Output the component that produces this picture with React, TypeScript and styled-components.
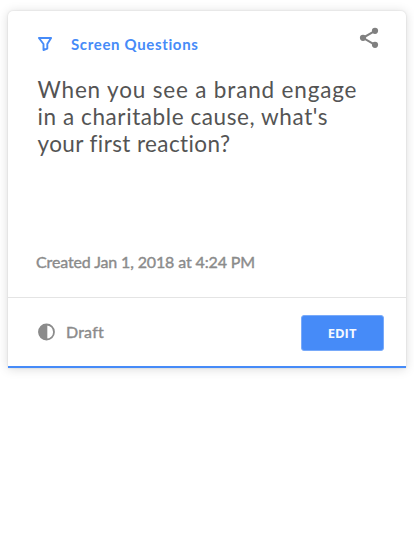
import React from 'react';
import styled, { createGlobalStyle } from 'styled-components';

const GlobalStyle = createGlobalStyle`
  * { box-sizing: border-box; }
  body { margin: 0; background: #fff; font-family: Lato, "Open Sans", sans-serif; }
`;

const Page = styled.main`
  width: 414px;
  height: 537px;
  padding: 10.5px 8px 0;
  overflow: hidden;
`;

const Card = styled.article`
  display: flex;
  flex-direction: column;
  width: 397.6px;
  height: 357px;
  background: #fff;
  border-bottom: 2px solid #468bf8;
  border-radius: 5px 5px 0 0;
  box-shadow: 0 0 2px rgba(0, 0, 0, 0.14), 0 1px 11px rgba(0, 0, 0, 0.15);
`;

const Body = styled.div`
  display: flex;
  flex-direction: column;
  height: 286.5px;
  padding: 16.5px 26.6px 0 29px;
`;

const Header = styled.header`
  display: flex;
  align-items: flex-start;
  height: 40px;
`;

const FilterIcon = styled.svg`
  width: 16px;
  height: 16px;
  margin-top: 9px;
`;

const Category = styled.span`
  margin: 7px 0 0 18px;
  font-size: 15px;
  font-weight: 700;
  line-height: 20px;
  letter-spacing: 0.65px;
  color: #468bf8;
  white-space: nowrap;
`;

const ShareButton = styled.button`
  display: flex;
  margin-left: auto;
  padding: 0;
  border: 0;
  background: none;
`;

const Question = styled.h1`
  margin: 10.4px 0 0 0.5px;
  font-size: 22.5px;
  font-weight: 400;
  line-height: 26.7px;
  color: #545454;
`;

const Line = styled.span<{ $spacing: number }>`
  display: block;
  letter-spacing: ${({ $spacing }) => $spacing}px;
  white-space: nowrap;
`;

const Created = styled.p`
  margin: auto 0 25px -1px;
  font-size: 16px;
  font-weight: 400;
  line-height: 20px;
  letter-spacing: -0.13px;
  color: #8b8b8b;
  -webkit-text-stroke: 0.4px #8b8b8b;
  white-space: nowrap;
`;

const Footer = styled.footer`
  display: flex;
  align-items: center;
  flex: 1;
  padding: 3px 22px 0 30px;
  border-top: 1px solid #e4e4e4;
`;

const StatusIcon = styled.svg`
  width: 17px;
  height: 18px;
  margin-top: -2px;
`;

const Status = styled.span`
  margin: -3px 0 0 11px;
  font-size: 16px;
  line-height: 20px;
  letter-spacing: 0.2px;
  color: #8b8b8b;
  -webkit-text-stroke: 0.4px #8b8b8b;
`;

const EditButton = styled.button`
  width: 83px;
  height: 36px;
  margin-left: auto;
  padding: 0;
  border: 1px solid #78aafa;
  border-radius: 3px;
  background: #468bf8;
  color: #f4f8ff;
  font: 700 13px/34px "Open Sans", sans-serif;
`;

export default function App() {
  return (
    <Page>
      <GlobalStyle />
      <Card>
        <Body>
          <Header>
            <FilterIcon viewBox="0 0 16 16" fill="none" stroke="#468bf8" strokeWidth="1.9" strokeLinejoin="round">
              <path d="M1.9 2h12.2L10.3 8v4.6L6.5 14V8Z" />
            </FilterIcon>
            <Category>Screen Questions</Category>
            <ShareButton aria-label="Share">
              <svg width="20" height="22" viewBox="0 0 20 22" fill="#808080">
                <path d="M16 3.8 4 10.8l12 7" fill="none" stroke="#808080" strokeWidth="2.1" />
                <circle cx="16" cy="3.8" r="3.1" />
                <circle cx="4" cy="10.8" r="3.1" />
                <circle cx="16" cy="17.8" r="3.1" />
              </svg>
            </ShareButton>
          </Header>
          <Question>
            <Line $spacing={0.83}>When you see a brand engage</Line>
            <Line $spacing={0.59}>in a charitable cause, what's</Line>
            <Line $spacing={0.4}>your first reaction?</Line>
          </Question>
          <Created>Created Jan 1, 2018 at 4:24 PM</Created>
        </Body>
        <Footer>
          <StatusIcon viewBox="0 0 17 18">
            <circle cx="8.5" cy="9" r="7.5" fill="none" stroke="#8b8b8b" strokeWidth="1.8" />
            <path d="M9.3 1.2H8.5a7.8 7.8 0 0 0 0 15.6h.8Z" fill="#8b8b8b" />
          </StatusIcon>
          <Status>Draft</Status>
          <EditButton>EDIT</EditButton>
        </Footer>
      </Card>
    </Page>
  );
}
